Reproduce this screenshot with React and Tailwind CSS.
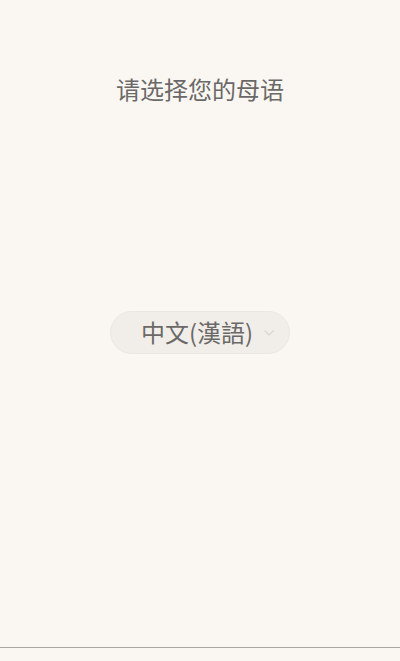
import React from 'react';

const App = () => {
    return (
        <div className="h-[661px] w-full bg-[#faf7f3] flex flex-col font-['Noto_Sans','Noto_Sans_CJK_SC',sans-serif] text-[#6b6967]">
            <p className="pt-[74px] text-center text-[24px] leading-[32px]">请选择您的母语</p>
            <div className="flex-1 flex justify-center pt-[205px]">
                <button className="h-[43px] w-[180px] rounded-full bg-[#f1eeea] border border-[#ebe7e2] flex items-center pl-[30px] pr-[14px] pb-[2px]">
                    <span className="text-[24px] leading-none font-['Noto_Sans_CJK_TC',sans-serif]">中文(漢語)</span>
                    <svg className="ml-auto mt-[2px]" width="12" height="8" viewBox="0 0 12 8" fill="none">
                        <path d="M1.5 1.5 6 6l4.5-4.5" stroke="#d9d4ce" strokeWidth="1.2" />
                    </svg>
                </button>
            </div>
            <div className="h-px bg-[#aaa6a1] mb-[13px]" />
        </div>
    );
};

export default App;
